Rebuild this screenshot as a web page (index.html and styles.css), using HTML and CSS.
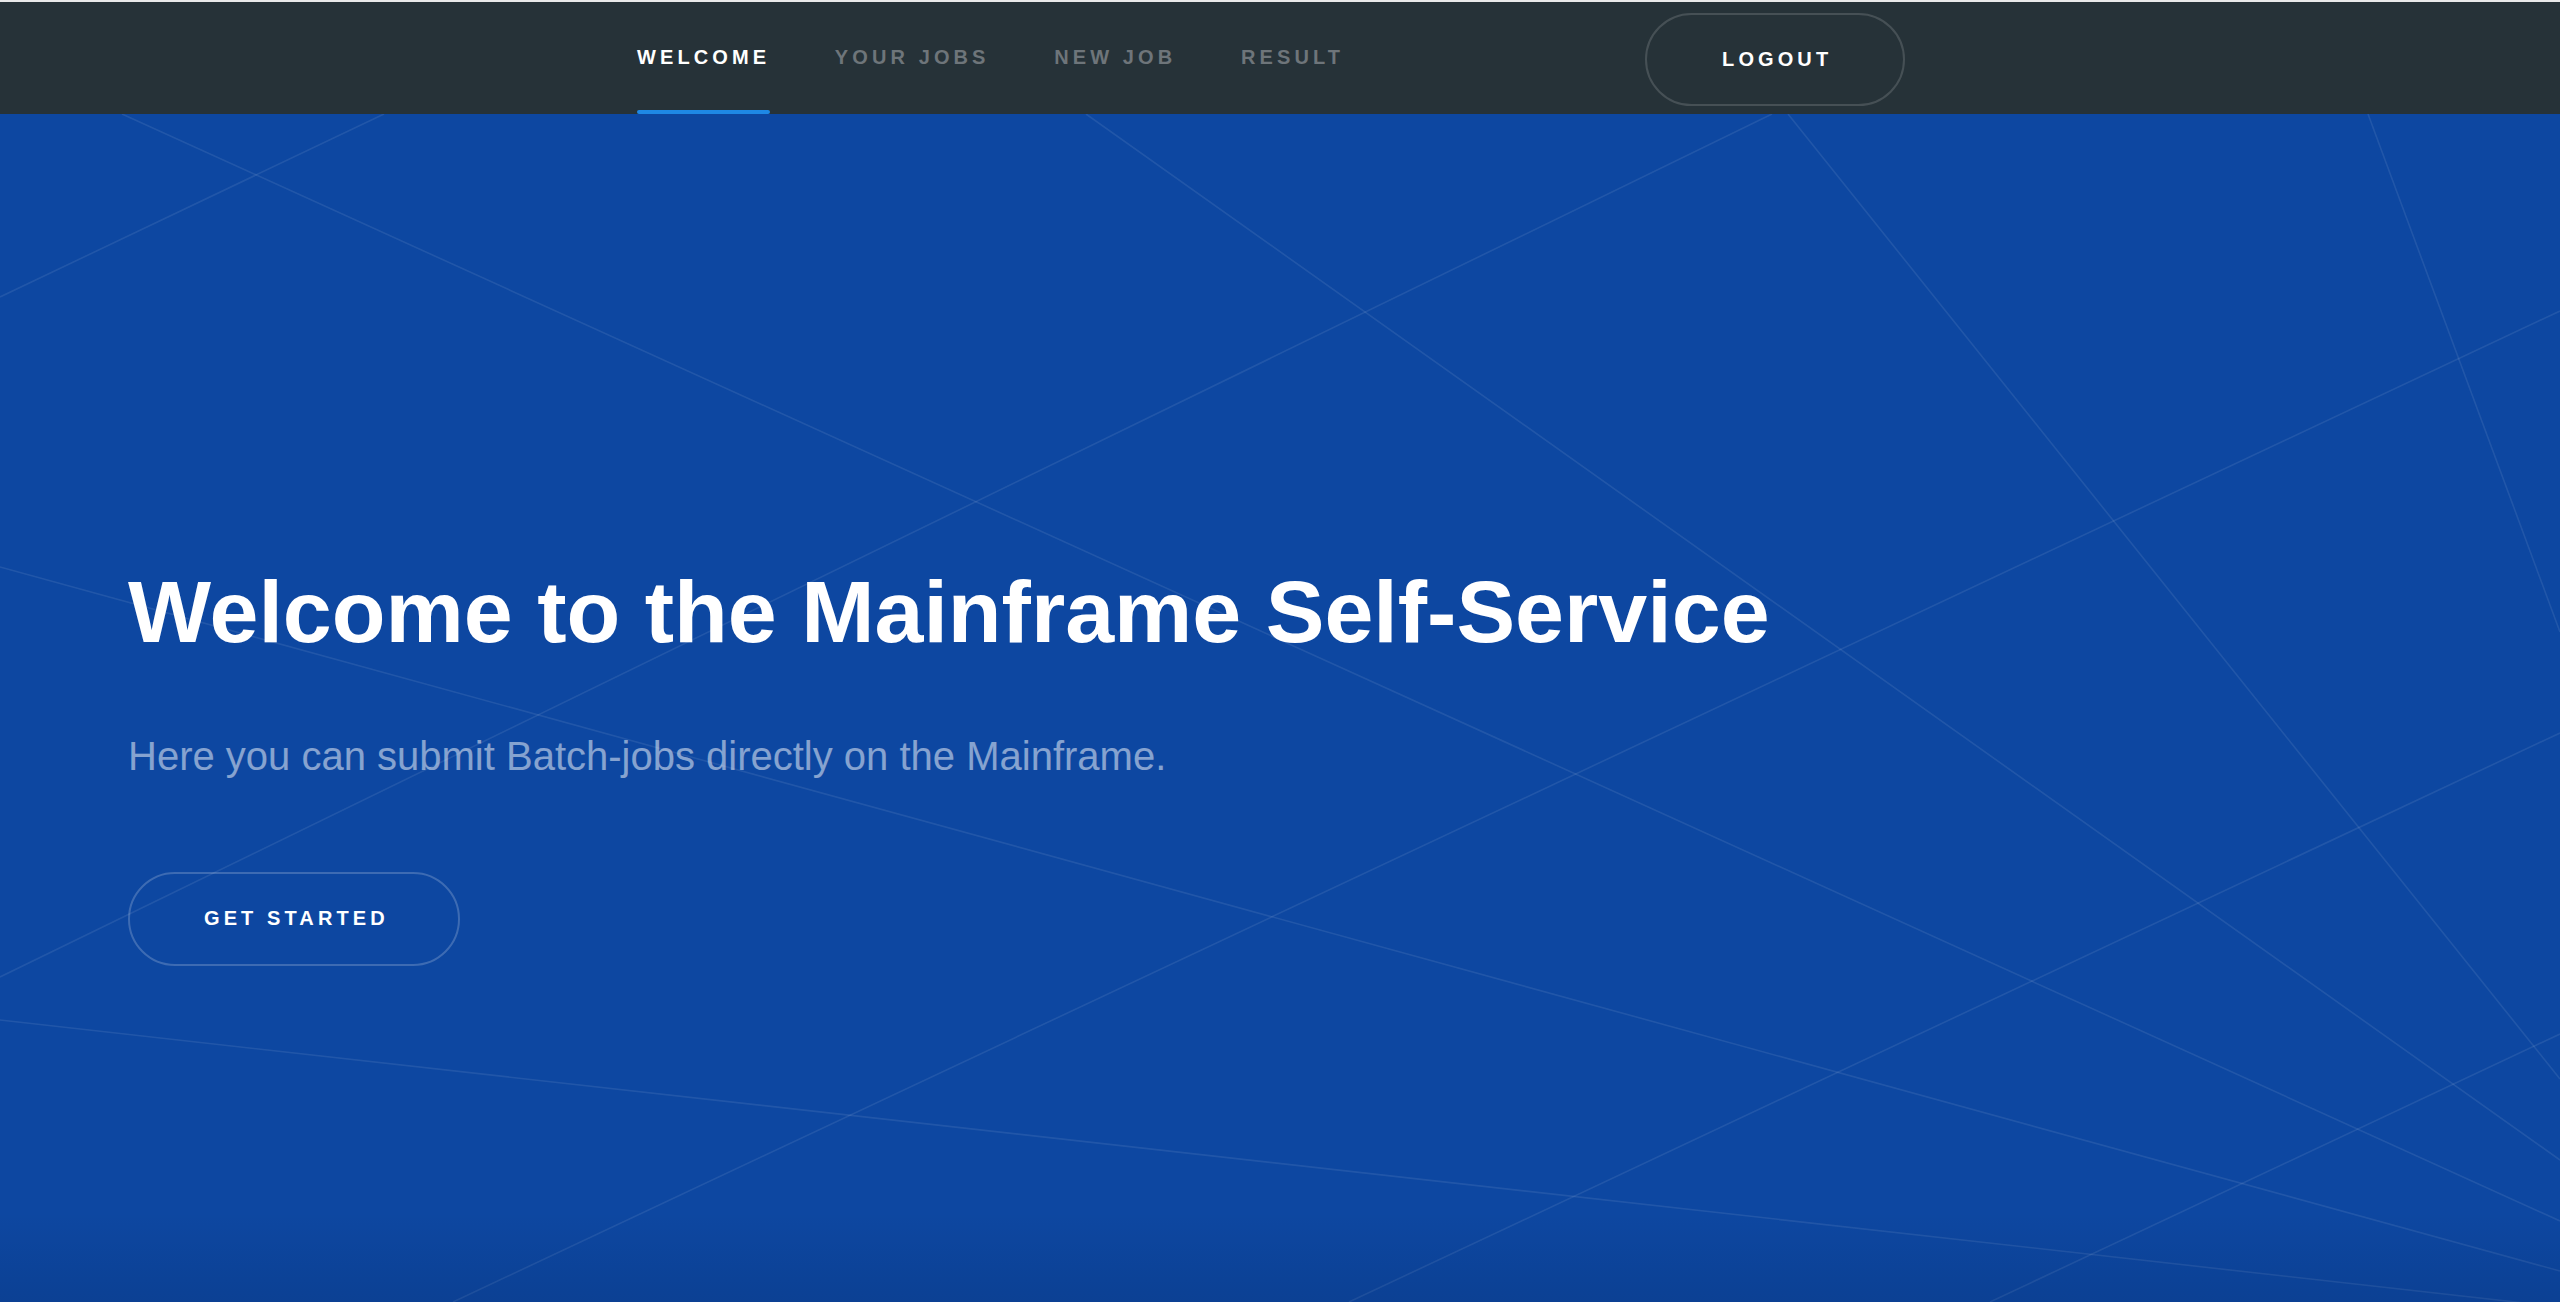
FILE: index.html
```html
<!DOCTYPE html>
<html lang="en">
<head>
<meta charset="utf-8">
<title>Mainframe Self-Service</title>
<link rel="stylesheet" href="styles.css">
</head>
<body>
<div class="topstrip"></div>
<header class="navbar">
  <nav class="nav-links">
    <a class="nav-item active" href="#">WELCOME</a>
    <a class="nav-item" href="#">YOUR JOBS</a>
    <a class="nav-item" href="#">NEW JOB</a>
    <a class="nav-item" href="#">RESULT</a>
  </nav>
  <a class="btn-pill logout" href="#">LOGOUT</a>
</header>
<main class="hero">
  <svg class="hero-lines" viewBox="0 114 2560 1188" preserveAspectRatio="none" aria-hidden="true">
    <g stroke="rgba(255,255,255,0.085)" stroke-width="1.6" fill="none">
      <line x1="0" y1="297" x2="384" y2="114"/>
      <line x1="122" y1="114" x2="2560" y2="1221"/>
      <line x1="1086" y1="114" x2="2560" y2="1160"/>
      <line x1="1788" y1="114" x2="2560" y2="1079"/>
      <line x1="2368" y1="114" x2="2560" y2="632"/>
      <line x1="0" y1="567" x2="2560" y2="1271"/>
      <line x1="0" y1="977" x2="1772" y2="114"/>
      <line x1="453" y1="1302" x2="2560" y2="311"/>
      <line x1="1349" y1="1302" x2="2560" y2="733"/>
      <line x1="1990" y1="1302" x2="2560" y2="1034"/>
      <line x1="0" y1="1020" x2="2560" y2="1307"/>
    </g>
  </svg>
  <div class="hero-content">
    <h1 class="hero-title">Welcome to the Mainframe Self-Service</h1>
    <p class="hero-sub">Here you can submit Batch-jobs directly on the Mainframe.</p>
    <a class="btn-pill start" href="#">GET STARTED</a>
  </div>
</main>
</body>
</html>
```

FILE: styles.css
```css
* { box-sizing: border-box; }
html, body {
  margin: 0;
  padding: 0;
  height: 100%;
}
body {
  font-family: "Liberation Sans", Arial, Helvetica, sans-serif;
  background: #0d47a1;
  overflow: hidden;
}
.topstrip {
  height: 2px;
  background: #e9e9e9;
}
.navbar {
  height: 112px;
  background: #263238;
  display: flex;
  align-items: stretch;
  padding-left: 637px;
}
.nav-links {
  display: flex;
  gap: 64.7px;
}
.nav-item {
  position: relative;
  display: flex;
  align-items: center;
  font-size: 20px;
  font-weight: 700;
  letter-spacing: 4.1px;
  color: #6e757a;
  text-decoration: none;
  padding-bottom: 1px;
}
.nav-item.active { color: #ffffff; }
.nav-item.active::after {
  content: "";
  position: absolute;
  left: 0;
  right: 0;
  bottom: 0;
  height: 4px;
  border-radius: 2px;
  background: #1e88e5;
}
.btn-pill {
  display: inline-flex;
  align-items: center;
  justify-content: center;
  font-size: 20px;
  font-weight: 700;
  letter-spacing: 4.1px;
  color: #ffffff;
  text-decoration: none;
  border-radius: 60px;
  border: 2px solid rgba(255,255,255,0.15);
}
.logout {
  align-self: flex-start;
  margin-top: 11px;
  margin-left: 301px;
  height: 93px;
  padding: 0 71px 0 75px;
}
.hero {
  position: relative;
  height: 1188px;
  background: #0d47a1;
  overflow: hidden;
}
.hero::after {
  content: "";
  position: absolute;
  left: 0;
  right: 0;
  bottom: 0;
  height: 90px;
  background: linear-gradient(to bottom, rgba(0,0,0,0), rgba(0,10,40,0.11));
  pointer-events: none;
}
.hero-lines {
  position: absolute;
  inset: 0;
  width: 100%;
  height: 100%;
}
.hero-content {
  position: relative;
  z-index: 1;
  padding: 450px 0 0 128px;
  display: flex;
  flex-direction: column;
  align-items: flex-start;
}
.hero-title {
  margin: 0;
  font-size: 88px;
  line-height: 1.1;
  font-weight: 700;
  color: #ffffff;
}
.hero-sub {
  margin: 65px 0 0;
  font-size: 40px;
  line-height: 60px;
  color: rgba(255,255,255,0.5);
}
.start {
  margin-top: 86px;
  height: 94px;
  padding: 0 69px 0 74px;
  border-color: rgba(255,255,255,0.2);
}
```
